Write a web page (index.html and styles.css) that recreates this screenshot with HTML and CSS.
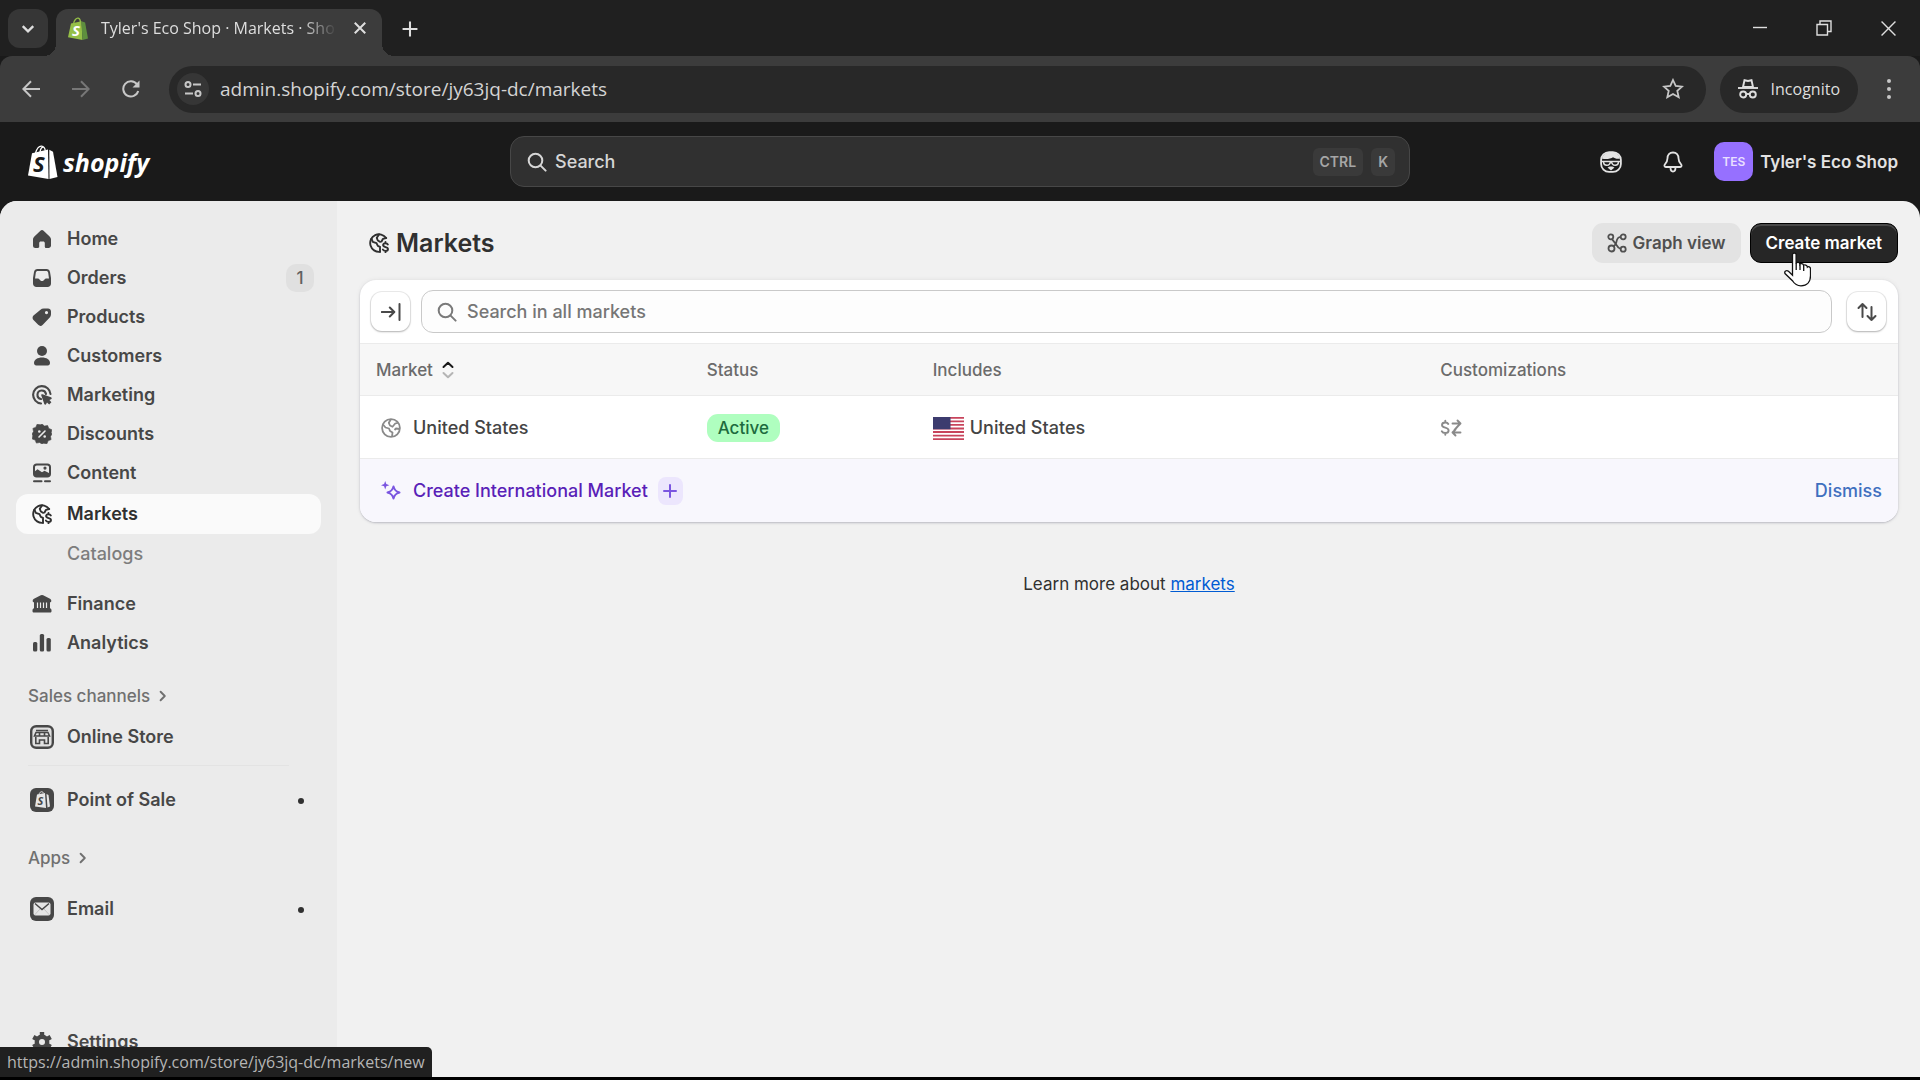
FILE: index.html
```html
<!DOCTYPE html>
<html lang="en">
<head>
<meta charset="utf-8">
<meta name="viewport" content="width=device-width, initial-scale=1">
<title>Tyler's Eco Shop · Markets · Shopify</title>
<link rel="stylesheet" href="styles.css">
</head>
<body>
<svg class="defs" aria-hidden="true">
  <symbol id="globe-dollar" viewBox="0 0 20 20">
    <g fill="none" stroke="currentColor" stroke-width="1.9" stroke-linecap="round" stroke-linejoin="round">
      <path d="M17.2 5A8.800 8.800 0 1 0 11 18.800"/>
      <path d="M2.400 5.500l1.400 3.300 3.700 1.400 1.300 2.600 2.200 1v5"/>
      <path d="M10 1.400L7.800 4.800l1 2.700 2.400 1.300"/>
      <path d="M17 5l-3 .8-1.500 2.700"/>
      <path d="M18.800 11.400c-.5-.9-1.300-1.200-2.400-1.200-1.300 0-2.300.7-2.300 1.900 0 2.700 4.900 1.200 4.900 3.900 0 1.200-1 1.900-2.500 1.900-1.200 0-2.100-.4-2.600-1.300M16.500 8.900v1.300M16.500 17.900v1.300"/>
    </g>
  </symbol>
  <symbol id="magnifier" viewBox="0 0 20 20">
    <g fill="none" stroke="currentColor" stroke-width="2" stroke-linecap="round"><circle cx="8.500" cy="8.500" r="6.800"/><path d="M13.600 13.600l5 5"/></g>
  </symbol>
  <symbol id="chevron" viewBox="0 0 10 10">
    <path d="M3 1.500L6.500 5 3 8.500" fill="none" stroke="currentColor" stroke-width="1.600" stroke-linecap="round" stroke-linejoin="round"/>
  </symbol>
</svg>

<div class="tabstrip">
  <button class="tab-search" aria-label="Search tabs"><svg viewBox="0 0 12 12" width="14" height="14"><path d="M1.500 3.500L6 8l4.500-4.500" fill="none" stroke="currentColor" stroke-width="2"/></svg></button>
  <div class="tab">
    <svg class="favicon" viewBox="0 0 20 23" width="20" height="23">
      <path d="M3 6.500l10.500-2.300L14.500 23 0 20.300z" fill="#95bf47"/><path d="M13.500 4.200l3.600 1.300L20 21.500 14.500 23z" fill="#5e8e3e"/>
      <path d="M5.500 7C6 3 8.500.8 10.200 1.200c1.800.4 2.200 2.500 2.200 4.500" fill="none" stroke="#95bf47" stroke-width="1.300"/>
      <text class="bag-s" x="4" y="18.500" fill="#fff">S</text>
    </svg>
    <span class="tab-title">Tyler's Eco Shop · Markets · Sho</span>
    <button class="tab-close" aria-label="Close tab"><svg viewBox="0 0 12 12" width="14" height="14"><path d="M1.500 1.500l9 9M10.500 1.500l-9 9" stroke="currentColor" stroke-width="1.700"/></svg></button>
  </div>
  <button class="new-tab" aria-label="New tab"><svg viewBox="0 0 14 14" width="16" height="16"><path d="M7 .5v13M.5 7h13" stroke="currentColor" stroke-width="1.800"/></svg></button>
  <div class="window-buttons">
    <button aria-label="Minimize"><svg viewBox="0 0 14 14" width="14" height="14"><path d="M0 6.500h14" stroke="currentColor" stroke-width="1.400"/></svg></button>
    <button aria-label="Restore"><svg viewBox="0 0 16 16" width="16" height="16"><path d="M1 4.500h10.500V15H1zM4 4.500V1h11v10.500h-3.500" fill="none" stroke="currentColor" stroke-width="1.400"/></svg></button>
    <button aria-label="Close"><svg viewBox="0 0 14 14" width="15" height="15"><path d="M.5.5l13 13M13.500.5l-13 13" stroke="currentColor" stroke-width="1.300"/></svg></button>
  </div>
</div>

<div class="toolbar">
  <button class="nav-btn" aria-label="Back"><svg viewBox="0 0 18 18" width="18" height="18"><path d="M18 9H1.500M9 1.200L1.300 9 9 16.800" fill="none" stroke="currentColor" stroke-width="2"/></svg></button>
  <button class="nav-btn" aria-label="Forward" disabled><svg viewBox="0 0 18 18" width="18" height="18"><path d="M0 9h16.500M9 1.200L16.700 9 9 16.800" fill="none" stroke="currentColor" stroke-width="2"/></svg></button>
  <button class="nav-btn" aria-label="Reload"><svg viewBox="0 0 18 18" width="18" height="18"><path d="M16.200 11A7.600 7.600 0 1 1 15 4.400" fill="none" stroke="currentColor" stroke-width="2"/><path d="M17.500.5v7h-7z" fill="currentColor"/></svg></button>
  <div class="omnibox">
    <button class="site-info" aria-label="View site information"><svg viewBox="0 0 18 18" width="18" height="18"><g fill="none" stroke="currentColor" stroke-width="2"><circle cx="4" cy="4.500" r="2.500"/><path d="M9 4.500h8M1 13.500h8"/><circle cx="14" cy="13.500" r="2.500"/></g></svg></button>
    <input class="url" type="text" aria-label="Address" value="admin.shopify.com/store/jy63jq-dc/markets">
    <button class="star" aria-label="Bookmark this tab"><svg viewBox="0 0 22 22" width="22" height="22"><path d="M11 2l2.700 5.900 6.400.7-4.800 4.300 1.400 6.300L11 16l-5.700 3.200 1.400-6.300L1.900 8.600l6.400-.7z" fill="none" stroke="currentColor" stroke-width="1.800"/></svg></button>
  </div>
  <button class="incognito"><svg viewBox="0 0 20 20" width="20" height="20"><path d="M5 8L6.500 1.200 10 2l3.500-.8L15 8z" fill="none" stroke="currentColor" stroke-width="1.900"/><g fill="none" stroke="currentColor" stroke-width="1.900"><path d="M0 9h20"/><circle cx="5.200" cy="15.500" r="3"/><circle cx="14.800" cy="15.500" r="3"/><path d="M8 15h4"/></g></svg>Incognito</button>
  <button class="menu" aria-label="Menu"><svg viewBox="0 0 4 20" width="4" height="20" fill="currentColor"><circle cx="2" cy="2" r="2"/><circle cx="2" cy="10" r="2"/><circle cx="2" cy="18" r="2"/></svg></button>
</div>

<header class="topbar">
  <a class="logo" href="#" aria-label="Shopify">
    <svg viewBox="0 0 30 34" width="30" height="34">
      <path d="M4 8.200L20 4.500 20.500 34 0 30.500z" fill="#fff"/><path d="M21.300 4.700l3.700 2L29.500 32l-8 2z" fill="#fff"/>
      <path d="M7.500 8C9 3.500 11.500 1 13.500 1.200c2.200.2 3.500 2.500 3.800 4.500M12 7c.5-3 2-5 3.500-5" fill="none" stroke="#fff" stroke-width="1.300"/>
      <text class="logo-s" x="5" y="26.500" fill="#1a1a1a">S</text>
    </svg>
    <span>shopify</span>
  </a>
  <button class="global-search"><svg width="20" height="20"><use href="#magnifier"/></svg><span class="grow">Search</span><kbd>CTRL</kbd><kbd>K</kbd></button>
  <div class="account">
    <button aria-label="Sidekick"><svg viewBox="0 0 22 22" width="22" height="22"><rect x="1.100" y="1.100" width="19.800" height="19.800" rx="8" fill="none" stroke="currentColor" stroke-width="1.800"/><path d="M2 7.500C3 3.500 6.500 1 11 1s8.300 2.500 9 6.500c-3 .6-5.500-.2-7-1.300C11 8 5 8.500 2 7.500z" fill="currentColor"/><g fill="none" stroke="currentColor" stroke-width="1.500"><path d="M1 10.500h20"/><path d="M3.500 10.500c0 5 6.500 5 7 0M11.500 10.500c.5 5 7 5 7 0"/></g><path d="M7.500 16.500c1.500-1.500 5.500-1.500 7 0l-3.500 3z" fill="currentColor"/></svg></button>
    <button aria-label="Alerts"><svg viewBox="0 0 22 22" width="22" height="22"><g fill="none" stroke="currentColor" stroke-width="1.800" stroke-linejoin="round"><path d="M11 1.500C7.500 1.500 5.500 4 5.500 7.300c0 3-.8 4.200-2.600 6-.9.900-.6 2.700 1 2.700h14.200c1.600 0 1.900-1.800 1-2.700-1.800-1.800-2.600-3-2.600-6C16.500 4 14.500 1.500 11 1.500z"/><path d="M8.500 16.500c0 3.200 1 4 2.500 4s2.500-.8 2.500-4"/></g></svg></button>
    <button class="store"><span class="avatar">TES</span>Tyler's Eco Shop</button>
  </div>
</header>

<div class="shell">
  <nav class="sidebar" aria-label="Main">
    <ul>
      <li><a href="#"><svg viewBox="0 0 20 20"><path d="M8.400 1.700a2.300 2.300 0 0 1 3.200 0l6 5.700c.9.900 1.400 2 1.400 3.200v5.900c0 1.400-1.100 2.500-2.500 2.500H14a1.200 1.200 0 0 1-1.200-1.200V14c0-.9-.7-1.500-1.500-1.500H8.700c-.8 0-1.500.6-1.500 1.500v3.800c0 .7-.5 1.200-1.200 1.200H3.500A2.500 2.500 0 0 1 1 16.500v-5.900c0-1.200.5-2.300 1.400-3.200z"/></svg>Home</a></li>
      <li><a href="#"><svg viewBox="0 0 20 20"><path fill-rule="evenodd" d="M5.500 1h9c1.800 0 3.200 1.200 3.500 3l1 6v5.500c0 2-1.500 3.500-3.500 3.500h-11C2.500 19 1 17.500 1 15.500V10l1-6c.3-1.800 1.700-3 3.500-3zm.3 2C4.700 3 4 3.600 3.800 4.700L3 10.500h2.800c.8 0 1.300.4 1.700 1 .5.900 1.300 1.500 2.500 1.500s2-.6 2.500-1.500c.4-.6.9-1 1.700-1H17l-.8-5.800C16 3.600 15.300 3 14.200 3z"/></svg>Orders<span class="count">1</span></a></li>
      <li><a href="#"><svg viewBox="0 0 20 20"><path fill-rule="evenodd" d="M12 1.500h4c1.700 0 3 1.300 3 3V7c0 1.500-.5 2.700-1.500 3.700l-6.700 7a3.200 3.200 0 0 1-4.600.1L1.500 13c-1.300-1.300-1.200-3.300 0-4.500l6.700-5.600A5.500 5.500 0 0 1 12 1.500zM14.500 7.200a1.600 1.600 0 1 0 0-3.200 1.600 1.600 0 0 0 0 3.200z"/></svg>Products</a></li>
      <li><a href="#"><svg viewBox="0 0 20 20"><circle cx="10" cy="5" r="5"/><path d="M2 17c0-3.200 3.500-5.400 8-5.400s8 2.200 8 5.400c0 1.400-.9 2.400-2.200 2.400H4.200C2.900 19.400 2 18.400 2 17z"/></svg>Customers</a></li>
      <li><a href="#"><svg viewBox="0 0 20 20"><g fill="none" stroke="currentColor" stroke-width="2.100" stroke-linecap="round"><path d="M18.500 9A8.700 8.700 0 1 0 9 18.500"/><path d="M14 9a4.300 4.300 0 1 0-5 5"/></g><path d="M9.300 10.500c-.3-.9.400-1.500 1.200-1.200l8.500 3c1 .4 1 1.500.1 1.900l-1.700.8 2 2.200-2.200 2.200-2.200-2-.8 1.700c-.4.900-1.500.9-1.900-.1z"/></svg>Marketing</a></li>
      <li><a href="#"><svg viewBox="0 0 20 20"><path d="M10 0l2.500 2.100L15.600 1.500l1.200 3 3 1.200-.6 3.100L20 10l-1.500 2.400.6 3.200-3 1.200-1.200 3-3.200-.6L10 20l-2.400-1.500-3.200.6-1.200-3-3-1.200.6-3.200L0 10l1.500-2.400L.9 4.400l3-1.200 1.200-3 3.200.6z" stroke="currentColor" stroke-width=".6" stroke-linejoin="round"/><path d="M7 13l6-6" stroke="#ebebeb" stroke-width="1.600" stroke-linecap="round"/><circle cx="7.300" cy="7.500" r="1.300" fill="#ebebeb"/><circle cx="12.700" cy="12.500" r="1.300" fill="#ebebeb"/></svg>Discounts</a></li>
      <li><a href="#"><svg viewBox="0 0 20 20"><path fill-rule="evenodd" d="M4.500.5h11C17.500.5 19 2 19 4v7c0 2-1.500 3.500-3.500 3.500h-11C2.500 14.500 1 13 1 11V4C1 2 2.500.5 4.500.5zm.3 2C3.700 2.500 3 3.200 3 4.300v4l2.500-2 4.500 3 2.500-1.500L17 10V4.300c0-1.100-.7-1.800-1.800-1.800zM13 6.700A1.600 1.600 0 1 0 13 3.500a1.600 1.600 0 0 0 0 3.200z"/><path d="M2 18.300h7.500M13 18.300h5" stroke="currentColor" stroke-width="2" stroke-linecap="round"/></svg>Content</a></li>
      <li class="current"><a href="#" aria-current="page"><svg><use href="#globe-dollar"/></svg>Markets</a></li>
      <li class="sub"><a href="#">Catalogs</a></li>
    </ul>
    <ul class="finance">
      <li><a href="#"><svg viewBox="0 0 20 20"><path d="M8.800 1.300a2.500 2.500 0 0 1 2.400 0l6.800 3.500c1 .5 1.300 1.200 1.300 2.200 0 .8-.5 1.300-1.300 1.300v5.900c.8.300 1.500 1 1.500 2v1c0 .8-.6 1.300-1.300 1.300H1.800C1.100 18.500.5 18 .5 17.200v-1c0-1 .7-1.700 1.500-2V8.300C1.200 8.300.7 7.800.7 7c0-1 .3-1.700 1.300-2.200z"/><path d="M5.500 8.500v5.500M8.500 8.500v5.500M11.500 8.500v5.500M14.500 8.500v5.500" stroke="#ebebeb" stroke-width="1.200"/></svg>Finance</a></li>
      <li><a href="#"><svg viewBox="0 0 20 20"><rect x="1" y="9" width="4.300" height="9.500" rx="1.500"/><rect x="7.800" y="1" width="4.300" height="17.500" rx="1.500"/><rect x="14.500" y="5" width="4.300" height="13.500" rx="1.500"/></svg>Analytics</a></li>
    </ul>
    <a class="group" href="#">Sales channels<svg width="12" height="12"><use href="#chevron"/></svg></a>
    <ul class="boxed">
      <li><a href="#"><svg viewBox="0 0 24 24"><rect x="1.200" y="1.200" width="21.600" height="21.600" rx="5" fill="#e0e0e0" stroke="currentColor" stroke-width="2.400"/><g fill="none" stroke="currentColor" stroke-width="1.600"><path d="M6 5.500h12M6 7.500l-1.500 3.500h15L18 7.500zM9.500 8v3M14.500 8v3M5.800 12v6.500h3.700V15h5v3.500h3.700V12"/></g></svg>Online Store</a></li>
    </ul>
    <hr>
    <ul class="boxed">
      <li><a href="#"><svg viewBox="0 0 24 24"><rect width="24" height="24" rx="6"/><path d="M7 6.500l8-1.500 1 15-11-1.500zM16.500 6l2 1 1.500 11.500-2.500 1z" fill="#e6e6e6"/><path d="M9 6.500c.5-2.500 3-4 4.500-1.500" fill="none" stroke="#e6e6e6"/><text class="mini-s" x="7.500" y="16.500">S</text></svg>Point of Sale<span class="dot"></span></a></li>
    </ul>
    <a class="group" href="#">Apps<svg width="12" height="12"><use href="#chevron"/></svg></a>
    <ul class="boxed">
      <li><a href="#"><svg viewBox="0 0 24 24"><rect width="24" height="24" rx="6"/><rect x="3.500" y="5.500" width="17" height="13" rx="2" fill="#e6e6e6"/><path d="M5 6.500l7 6 7-6" fill="none" stroke="currentColor" stroke-width="1.500"/><path d="M4.500 18L10 12M19.500 18L14 12" stroke="#bbb" stroke-width=".8"/></svg>Email<span class="dot"></span></a></li>
    </ul>
    <ul class="bottom">
      <li><a href="#"><svg viewBox="0 0 20 20"><g fill="none" stroke="currentColor"><circle cx="10" cy="10" r="5.200" stroke-width="4.400"/><path d="M10 0v4M10 16v4M1.300 5l3.500 2M15.200 13l3.500 2M1.300 15l3.500-2M15.200 7l3.500-2" stroke-width="4.400"/></g></svg>Settings</a></li>
    </ul>
  </nav>

  <main>
    <div class="page-head">
      <h1><svg width="20" height="20"><use href="#globe-dollar"/></svg>Markets</h1>
      <div class="actions">
        <button class="btn"><svg viewBox="0 0 20 20" width="20" height="20"><g fill="none" stroke="currentColor" stroke-width="1.800"><circle cx="3.800" cy="3.800" r="2.500"/><circle cx="16.200" cy="3.800" r="2.500"/><circle cx="4.500" cy="15.500" r="3"/><circle cx="16.200" cy="16.200" r="2.500"/><path d="M5 6.100L8.800 11M13.700 3.900c-4.700.3-3.700 4.600-4.900 7.100l-2.200 2.300M8.800 11c1.500 2.500 2.500 4.400 4.900 5"/></g></svg>Graph view</button>
        <div class="create">
          <button class="btn primary">Create market</button>
          <svg class="pointer" viewBox="0 0 27 35" width="27" height="35"><path d="M8.500 2.600C8.500.5 12.100.5 12.100 2.600v9c.5-1.800 3.700-1.400 3.800.6.700-1.200 3.500-.9 3.700 1.200.9-1 3.600-.4 3.800 1.700.9-.9 3.100-.1 3.100 1.700v7c0 6-3.500 10-9.500 10-4 0-6.500-1.800-8.300-4.800L1 21.500c-1-2.200 1.500-3.800 3.500-2.200l4 4z" fill="#fff" stroke="#111" stroke-width="1.300"/><path d="M12.200 11v7M16 12.500V18M19.700 14v5" stroke="#111" stroke-width="1.300"/></svg>
        </div>
      </div>
    </div>

    <section class="card">
      <div class="filters">
        <button class="icon-btn" aria-label="Expand panel"><svg viewBox="0 0 20 20" width="20" height="20"><path d="M.8 10H13M8.800 5.500L13.300 10l-4.500 4.500M18.500 2v16" fill="none" stroke="currentColor" stroke-width="2" stroke-linecap="round" stroke-linejoin="round"/></svg></button>
        <label class="search"><svg width="20" height="20"><use href="#magnifier"/></svg><input type="text" placeholder="Search in all markets" aria-label="Search in all markets"></label>
        <button class="icon-btn" aria-label="Sort"><svg viewBox="0 0 20 20" width="20" height="20"><path d="M5.500 15V2M1.500 6l4-4 4 4M14.500 5v13M10.500 14l4 4 4-4" fill="none" stroke="currentColor" stroke-width="2" stroke-linecap="round" stroke-linejoin="round"/></svg></button>
      </div>
      <table>
        <thead>
          <tr>
            <th class="c-market"><button class="sort">Market<svg viewBox="0 0 12 18" width="12" height="18"><g fill="none" stroke-width="2" stroke-linecap="round" stroke-linejoin="round"><path d="M1.500 6L6 1.800 10.500 6" stroke="#1a1a1a"/><path d="M1.500 12L6 16.200l4.500-4.200" stroke="#b5b5b5"/></g></svg></button></th>
            <th class="c-status">Status</th>
            <th class="c-includes">Includes</th>
            <th>Customizations</th>
          </tr>
        </thead>
        <tbody>
          <tr>
            <td><span class="with-icon muted-icon"><svg viewBox="0 0 20 20" width="20" height="20"><g fill="none" stroke="currentColor" stroke-width="1.800" stroke-linejoin="round"><circle cx="10" cy="10" r="8.900"/><path d="M2 6.500l2.500 3 3.500 1 1 2.500 2.500 1.500-.5 4.400M10 1.200L7.800 4.800 9 7.500l2.500 1.300 2.700-3.300 2.600-.7M18.700 11l-3.700-.5-1.500 1.500"/></g></svg>United States</span></td>
            <td><span class="badge">Active</span></td>
            <td><span class="place"><svg viewBox="0 0 31 27" width="31" height="23" preserveAspectRatio="none"><path fill="#fff" d="M0 0h31v27H0z"/><path d="M0 1h31M0 5.200h31M0 9.300h31M0 13.500h31M0 17.600h31M0 21.800h31M0 26h31" stroke="#c8445c" stroke-width="2.100"/><path fill="#3c3b6e" d="M0 0h17.500v14.500H0z"/></svg>United States</span></td>
            <td class="custom"><svg viewBox="0 0 22 18" width="22" height="18"><g fill="none" stroke="currentColor" stroke-width="1.900" stroke-linecap="round" stroke-linejoin="round"><path d="M8.300 5C7.800 4 6.800 3.500 5.300 3.500 3.500 3.500 2 4.400 2 6c0 3.600 6.600 1.700 6.600 5.400 0 1.600-1.500 2.600-3.400 2.600-1.600 0-2.800-.6-3.400-1.700M5.300 1.800v1.500M5.300 14v1.700M12.500 4.500h8M17.500 1.500l3 3-3 3M20.500 13.500h-8M15.500 10.500l-3 3 3 3M18 7l-3.500 4"/></g></svg></td>
          </tr>
          <tr class="suggestion">
            <td colspan="4"><div class="suggest">
              <a class="with-icon" href="#"><svg viewBox="0 0 20 20" width="20" height="20"><path d="M4.200 0l1.100 3.100 3.100 1.100-3.100 1.100-1.100 3.100-1.100-3.100L0 4.200l3.100-1.100z" fill="currentColor"/><path d="M12.500 5.500c1 3.800 2.200 5 6 6-3.800 1-5 2.200-6 6-1-3.800-2.200-5-6-6 3.800-1 5-2.200 6-6z" fill="none" stroke="currentColor" stroke-width="2" stroke-linejoin="round"/></svg>Create International Market</a>
              <button class="add" aria-label="Add market"><svg viewBox="0 0 14 14" width="14" height="14"><path d="M7 1v12M1 7h12" stroke="currentColor" stroke-width="2" stroke-linecap="round"/></svg></button>
              <button class="dismiss">Dismiss</button>
            </div></td>
          </tr>
        </tbody>
      </table>
    </section>
    <p class="learn">Learn more about <a href="#">markets</a></p>
  </main>
</div>
<div class="link-status">https://admin.shopify.com/store/jy63jq-dc/markets/new</div>
</body>
</html>
```
FILE: styles.css
```css
* { box-sizing: border-box; }
body {
  margin: 0;
  min-height: 100vh;
  display: flex;
  flex-direction: column;
  background: #1a1a1a;
  border-bottom: 3px solid #000;
  font: 500 18px/24px Inter, sans-serif;
  color: #303030;
}
button, input { font: inherit; color: inherit; }
button { border: 0; padding: 0; background: none; display: flex; align-items: center; justify-content: center; }
a { color: inherit; text-decoration: none; }
ul { list-style: none; margin: 0; padding: 0; }
svg { flex: none; display: block; }
.defs { position: absolute; width: 0; height: 0; }

/* browser tabs */
.tabstrip { height: 56px; display: flex; padding: 9px 0 0 8px; background: #202020; color: #dedede; font: 400 16px/24px "Open Sans", sans-serif; }
.tab-search { width: 40px; height: 39px; border-radius: 12px; background: #363636; }
.tab { position: relative; width: 326px; margin-left: 8px; padding: 0 15px 9px 12px; display: flex; align-items: center; background: #3c3c3c; border-radius: 12px 12px 0 0; }
.tab::before, .tab::after { content: ""; position: absolute; bottom: 0; width: 12px; height: 12px; }
.tab::before { left: -12px; background: radial-gradient(circle at 0 0, transparent 12px, #3c3c3c 12px); }
.tab::after { right: -12px; background: radial-gradient(circle at 100% 0, transparent 12px, #3c3c3c 12px); }
.tab-title { flex: 1; margin-left: 13px; white-space: nowrap; -webkit-mask: linear-gradient(to right, #000 85%, transparent); mask: linear-gradient(to right, #000 85%, transparent); }
.tab-close { margin-left: 16px; }
.new-tab { width: 40px; height: 39px; margin-left: 8px; }
.window-buttons { display: flex; margin-left: auto; padding-bottom: 9px; }
.window-buttons button { width: 64px; }
.bag-s { font: italic 700 15px "Open Sans", sans-serif; }

.toolbar { height: 66px; display: flex; align-items: center; padding: 0 16px 0 6px; background: #3c3c3c; border-radius: 12px 12px 0 0; color: #c7c7c7; }
.nav-btn { width: 50px; height: 46px; }
.nav-btn:disabled { color: #777; }
.omnibox { flex: 1; height: 47px; margin-left: 13px; padding: 0 22px 0 8px; display: flex; align-items: center; border-radius: 24px; background: #282828; }
.site-info { width: 32px; height: 32px; border-radius: 16px; background: #363636; }
.url { flex: 1; min-width: 0; height: 40px; margin-left: 11px; padding: 0; border: 0; background: none; font: 400 19px/24px "Open Sans", sans-serif; color: #d4d4d4; }
.incognito { height: 47px; margin-left: 14px; padding: 0 18px; gap: 13px; border-radius: 24px; background: #282828; color: #dedede; font: 400 16px/24px "Open Sans", sans-serif; }
.menu { width: 30px; height: 40px; margin-left: 16px; }

/* admin header */
.topbar { height: 79px; padding: 0 22px; display: grid; grid-template-columns: 1fr 900px 1fr; align-items: center; color: #e3e3e3; }
.logo { display: flex; align-items: center; gap: 5px; padding-left: 6px; color: #fff; font: italic 700 25px/32px "Open Sans", sans-serif; }
.logo-s { font: italic 700 22px "Open Sans", sans-serif; }
.global-search { height: 51px; padding: 0 14px 0 16px; gap: 8px; border: 1px solid #474747; border-radius: 14px; background: #303030; color: #d6d6d6; }
.grow { flex: 1; text-align: left; }
kbd { padding: 0 7px; border-radius: 6px; background: #3a3a3a; color: #a6a6a6; font: 600 14px/28px Inter, sans-serif; }
.account { display: flex; justify-content: flex-end; align-items: center; gap: 40px; }
.store { gap: 7px; margin-left: -10px; font-size: 17px; font-weight: 600; white-space: nowrap; }
.avatar { width: 39px; border-radius: 10px; background: #9670ff; color: #eae0ff; font-size: 12px; line-height: 39px; }

/* admin frame */
.shell { flex: 1; display: flex; overflow: hidden; background: #f1f1f1; border-radius: 17px 17px 0 0; }
.sidebar { width: 337px; padding: 18px 16px 16px; display: flex; flex-direction: column; background: #ebebeb; font-weight: 600; }
.sidebar li a { height: 39px; padding: 0 7px 0 16px; display: flex; align-items: center; gap: 15px; border-radius: 12px; color: #474747; }
.sidebar li svg { width: 20px; height: 20px; fill: currentColor; }
.sidebar .boxed a { padding-left: 14px; gap: 13px; }
.sidebar .boxed svg { width: 24px; height: 24px; }
.sidebar .current a { height: 40px; margin-top: 2px; background: #fafafa; color: #303030; }
.sidebar .sub a { padding-left: 51px; color: #7d7d7d; font-weight: 500; }
.count { margin-left: auto; width: 28px; border-radius: 10px; background: #e0e0e0; color: #616161; font-size: 17px; font-weight: 500; line-height: 28px; text-align: center; }
.dot { margin: 2px 10px 0 auto; width: 6px; height: 6px; border-radius: 3px; background: #303030; }
.finance { margin-top: 11px; }
.group { display: flex; align-items: center; gap: 7px; margin-top: 22px; padding-left: 12px; color: #707070; font-size: 17px; font-weight: 500; }
.group + .boxed { margin-top: 9px; }
.boxed + .group { margin-top: 27px; }
.boxed + hr { margin: 9px 32px 14px 12px; }
hr { border: 0; height: 1px; background: #e3e3e3; }
.group ~ .group + .boxed { margin-top: 19px; }
.bottom { margin-top: auto; }
.mini-s { font: italic 700 11px "Open Sans", sans-serif; }

main { flex: 1; min-width: 0; padding: 22px 22px 40px 23px; }
.page-head { display: flex; align-items: center; justify-content: space-between; }
h1 { margin: 0; padding-left: 9px; display: flex; align-items: center; gap: 7px; font-size: 25px; line-height: 32px; font-weight: 600; }
.actions { display: flex; gap: 9px; }
.create { position: relative; }
.btn { height: 40px; padding: 0 15px; gap: 6px; border-radius: 11px; background: #e3e3e3; color: #505050; font-size: 17px; font-weight: 600; white-space: nowrap; }
.primary { border: 1px solid #000; background: #262626; color: #fff; box-shadow: inset 0 2px 0 #484848; }
.pointer { position: absolute; left: 34px; top: 29px; }

.card { margin-top: 17px; overflow: hidden; border-radius: 16px; background: #fff; box-shadow: 0 1px 2px #bcbcc4, 0 0 4px #e0e0e0; }
.filters { height: 63px; padding: 0 12px 0 11px; display: flex; align-items: center; gap: 11px; }
.icon-btn { width: 39px; height: 39px; border-radius: 11px; background: #fff; color: #4a4a4a; box-shadow: 0 1px 2px #b5b5b5, 0 0 0 1px #ebebeb; }
.search { flex: 1; height: 43px; margin-right: 4px; padding: 0 15px; display: flex; align-items: center; gap: 10px; border: 1px solid #c9c9c9; border-radius: 12px; background: #fdfdfd; color: #7a7a7a; }
.search input { flex: 1; min-width: 0; border: 0; padding: 0; background: none; outline: 0; font-weight: 500; }
.search input::placeholder { color: #767676; opacity: 1; }

table { width: 100%; border-collapse: collapse; table-layout: fixed; }
th, td { padding: 0 16px; text-align: left; border-top: 1px solid #ebebeb; }
th { height: 52px; background: #f7f7f7; color: #6b6b6b; font-size: 17px; font-weight: 500; }
td { height: 63px; padding-top: 2px; font-weight: 500; color: #444; }
.c-market { width: 21.5%; }
.c-status { width: 14.7%; }
.c-includes { width: 33%; }
.sort { gap: 9px; }
.with-icon { display: flex; align-items: center; gap: 12px; padding-left: 5px; }
.muted-icon svg { color: #8a8a8a; }
.badge { display: inline-block; padding: 0 11px; border-radius: 11px; background: #affebf; color: #1d6b3e; font-size: 17px; font-weight: 500; line-height: 28px; }
.place { display: flex; align-items: center; gap: 6px; }
.custom { color: #8a8a8a; }
.suggestion { background: #f8f7fd; }
.suggest { display: flex; align-items: center; gap: 10px; }
.suggest a { color: #5a1fb8; }
.suggest a svg { color: #7a55e0; }
.add { width: 25px; height: 28px; border-radius: 8px; background: #ece6fd; color: #7a55e0; }
.dismiss { margin-left: auto; color: #3f6fbf; }
.learn { margin: 50px 0 0; text-align: center; font-size: 17px; font-weight: 400; }
.learn a { color: #005bd3; text-decoration: underline; }

.link-status { position: fixed; left: 0; bottom: 3px; height: 30px; padding: 0 7px; border-radius: 0 5px 0 0; background: #202020; color: #b5b5b5; font: 400 16px/30px "Open Sans", sans-serif; }
```
